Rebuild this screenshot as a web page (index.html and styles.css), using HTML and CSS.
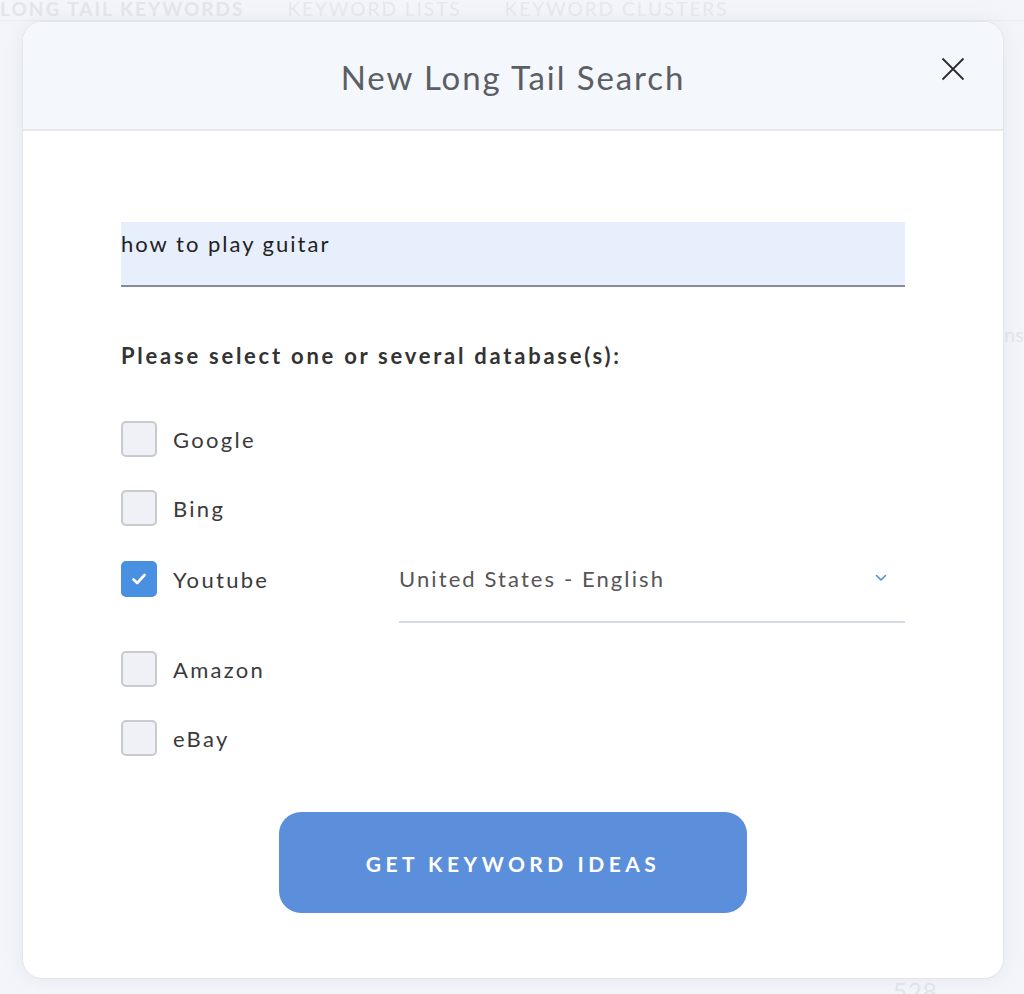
FILE: index.html
```html
<!DOCTYPE html>
<html>
<head>
<meta charset="utf-8">
<link rel="stylesheet" href="styles.css">
</head>
<body>
<div class="page">
  <nav class="tabs">
    <span class="tab active">LONG TAIL KEYWORDS</span>
    <span class="tab">KEYWORD LISTS</span>
    <span class="tab">KEYWORD CLUSTERS</span>
  </nav>
  <div class="bg-text ns">ns</div>
  <div class="bg-text num">528</div>
</div>

<div class="modal">
  <header class="modal-head">
    <h1 class="modal-title">New Long Tail Search</h1>
    <button class="close" aria-label="Close">
      <svg width="24" height="24" viewBox="0 0 24 24"><path d="M1.5 1.5 L22.5 22.5 M22.5 1.5 L1.5 22.5" stroke="#2b2b2b" stroke-width="1.8" fill="none"/></svg>
    </button>
  </header>
  <div class="modal-body">
    <div class="search-input">how to play guitar</div>
    <p class="db-label">Please select one or several database(s):</p>
    <div class="options">
      <div class="row">
        <span class="cb"></span><span class="opt">Google</span>
      </div>
      <div class="row">
        <span class="cb"></span><span class="opt">Bing</span>
      </div>
      <div class="row row-yt">
        <span class="cb checked">
          <svg width="18" height="18" viewBox="0 0 18 18"><path d="M3.5 9.5 L7.2 13 L14.5 5" stroke="#fff" stroke-width="2.6" fill="none" stroke-linecap="round" stroke-linejoin="round"/></svg>
        </span><span class="opt">Youtube</span>
        <div class="select">
          <span>United States - English</span>
          <svg class="chev" width="12" height="8" viewBox="0 0 12 8"><path d="M1.5 1.5 L6 6 L10.5 1.5" stroke="#4a8fe0" stroke-width="1.6" fill="none" stroke-linecap="round" stroke-linejoin="round"/></svg>
        </div>
      </div>
      <div class="row">
        <span class="cb"></span><span class="opt">Amazon</span>
      </div>
      <div class="row">
        <span class="cb"></span><span class="opt">eBay</span>
      </div>
    </div>
    <div class="actions">
      <button class="go">GET KEYWORD IDEAS</button>
    </div>
  </div>
</div>
</body>
</html>
```

FILE: styles.css
```css
html, body {
  margin: 0;
  padding: 0;
}
body {
  width: 1024px;
  height: 994px;
  overflow: hidden;
  background: #f3f5fa;
  font-family: "Lato", "Noto Sans", sans-serif;
  position: relative;
}
.page {
  height: 994px;
  position: relative;
}
.tabs {
  display: flex;
  gap: 43px;
  height: 20px;
  padding-left: 0;
  border-bottom: 1px solid #e9ecf1;
  font-size: 19px;
  letter-spacing: 2px;
  color: #e6e8ed;
  line-height: 17px;
}
.tab.active {
  font-weight: 700;
  color: #e3e5ea;
}
.bg-text {
  position: absolute;
  color: #e2e5ec;
  font-size: 20px;
}
.ns { left: 1004px; top: 322px; }
.num { left: 893px; top: 976px; font-size: 24px; letter-spacing: 1px; }

.modal {
  position: absolute;
  left: 22px;
  top: 21px;
  width: 980px;
  height: 956px;
  background: #fff;
  border: 1px solid #e3e5ea;
  border-radius: 20px;
  box-shadow: 0 0 18px rgba(200, 206, 222, 0.35);
  overflow: hidden;
  display: flex;
  flex-direction: column;
}
.modal-head {
  height: 107px;
  background: #f4f7fc;
  border-bottom: 2px solid #e6e8ec;
  display: flex;
  align-items: center;
  justify-content: center;
  position: relative;
}
.modal-title {
  margin: 0;
  padding-top: 2px;
  font-weight: 400;
  font-size: 33px;
  letter-spacing: 1.9px;
  color: #5b5e64;
}
.close {
  position: absolute;
  right: 38px;
  top: 35px;
  background: none;
  border: 0;
  padding: 0;
  width: 24px;
  height: 24px;
}
.modal-body {
  padding: 91px 98px 0 98px;
}
.search-input {
  background: #e8effc;
  border-bottom: 2px solid #878c98;
  font-size: 22px;
  letter-spacing: 2px;
  color: #222;
  line-height: 24px;
  padding-top: 10px;
  box-sizing: border-box;
  height: 65px;
}
.db-label {
  margin: 56px 0 0 0;
  font-size: 22px;
  font-weight: 700;
  letter-spacing: 2.75px;
  color: #333;
  line-height: 26px;
}
.options {
  margin-top: 52px;
  display: flex;
  flex-direction: column;
  gap: 33px;
}
.row {
  display: flex;
  align-items: center;
  height: 36px;
}
.row-yt {
  margin-top: 2px;
  margin-bottom: 21px;
}
.cb {
  width: 36px;
  height: 36px;
  box-sizing: border-box;
  border: 2px solid #c9cacd;
  border-radius: 5px;
  background: #eff1f6;
  display: flex;
  align-items: center;
  justify-content: center;
  flex: none;
}
.cb.checked {
  background: #4a90e2;
  border-color: #4a90e2;
}
.opt {
  margin-left: 16px;
  font-size: 22px;
  letter-spacing: 2.3px;
  color: #3a3a3a;
  width: 210px;
}
.select {
  margin-left: 16px;
  width: 506px;
  height: 86px;
  margin-top: -24px;
  margin-bottom: -26px;
  padding-bottom: 2px;
  box-sizing: border-box;
  border-bottom: 2px solid #d6dae2;
  display: flex;
  align-items: center;
  justify-content: space-between;
  padding-right: 18px;
  font-size: 22px;
  letter-spacing: 2.1px;
  color: #555;
}
.chev {
  margin-top: 0;
}
.actions {
  margin-top: 56px;
  display: flex;
  justify-content: center;
}
.go {
  width: 468px;
  height: 101px;
  border: 0;
  border-radius: 22px;
  background: #5b8fdb;
  color: #fff;
  font-family: "Lato", "Noto Sans", sans-serif;
  font-size: 21px;
  font-weight: 700;
  letter-spacing: 4.5px;
  padding-bottom: 0;
}
```
